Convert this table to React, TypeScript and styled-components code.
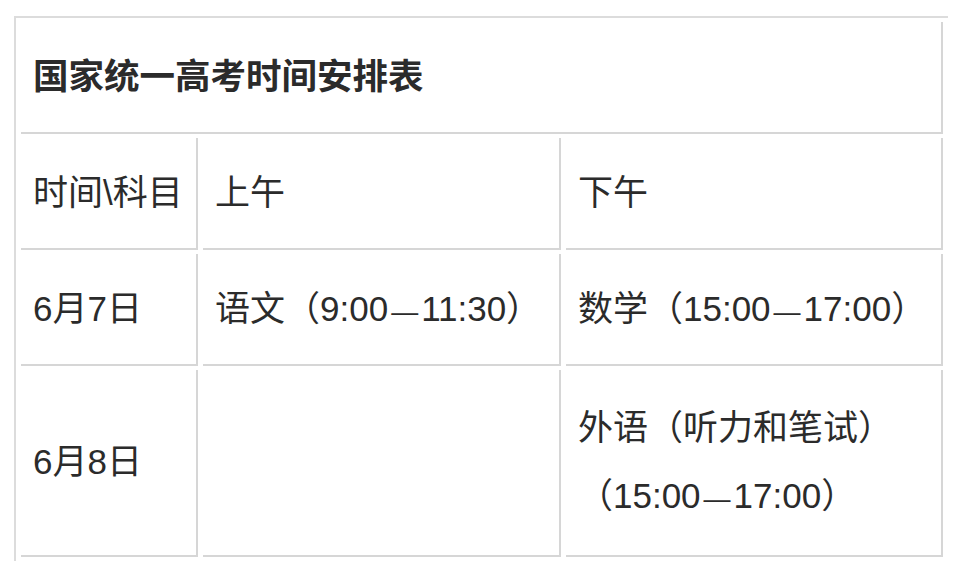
import { ReactElement } from "react";
import styled, { createGlobalStyle } from "styled-components";

const GlobalStyle = createGlobalStyle`
  html, body {
    margin: 0;
    padding: 0;
    background: #ffffff;
  }
  body {
    font-family: "Liberation Sans", "Noto Sans CJK SC", sans-serif;
    color: #333333;
  }
`;

const Page = styled.div`
  padding: 16px 12px 0 14px;
`;

const Table = styled.table`
  width: 934px;
  table-layout: fixed;
  border-collapse: separate;
  border-spacing: 5px 4px;
  border-top: 2px solid #dcdcdc;
  border-left: 2px solid #dcdcdc;
`;

const Cell = styled.td<{ $tall?: boolean; $bold?: boolean }>`
  box-sizing: border-box;
  padding: ${(p) => (p.$tall ? "24px 12px 25px" : "21px 12px")};
  border-right: 2px solid #d6d6d6;
  border-bottom: 2px solid #d6d6d6;
  font-size: ${(p) => (p.$bold ? "35.5px" : "35px")};
  line-height: 68px;
  font-weight: ${(p) => (p.$bold ? 700 : 400)};
  color: #2b2b2b;
  vertical-align: middle;
  white-space: nowrap;
`;

const Dash = styled.span`
  font-size: 27px;
  line-height: 1;
  margin: 0 3px;
`;

type Row = { date: string; morning: string; afternoon: string[] };

const rows: Row[] = [
  { date: "6月7日", morning: "语文（9:00—11:30）", afternoon: ["数学（15:00—17:00）"] },
  { date: "6月8日", morning: "", afternoon: ["外语（听力和笔试）", "（15:00—17:00）"] },
];

// split on the em dash so it can be drawn shorter, as in the source page
function withDash(text: string): ReactElement[] {
  return text.split("—").flatMap((part, i) =>
    i === 0 ? [<span key={i}>{part}</span>] : [<Dash key={`d${i}`}>—</Dash>, <span key={i}>{part}</span>]
  );
}

export default function App(): ReactElement {
  return (
    <Page>
      <GlobalStyle />
      <Table>
        <colgroup>
          <col style={{ width: 177 }} />
          <col style={{ width: 358 }} />
          <col style={{ width: 377 }} />
        </colgroup>
        <tbody>
          <tr>
            <Cell colSpan={3} $bold>
              国家统一高考时间安排表
            </Cell>
          </tr>
          <tr>
            <Cell>时间\科目</Cell>
            <Cell>上午</Cell>
            <Cell>下午</Cell>
          </tr>
          {rows.map((row, index) => {
            const tall = row.afternoon.length > 1;
            return (
              <tr key={index}>
                <Cell $tall={tall}>{row.date}</Cell>
                <Cell $tall={tall}>{withDash(row.morning)}</Cell>
                <Cell $tall={tall}>
                  {row.afternoon.map((line, i) => (
                    <div key={i}>{withDash(line)}</div>
                  ))}
                </Cell>
              </tr>
            );
          })}
        </tbody>
      </Table>
    </Page>
  );
}
